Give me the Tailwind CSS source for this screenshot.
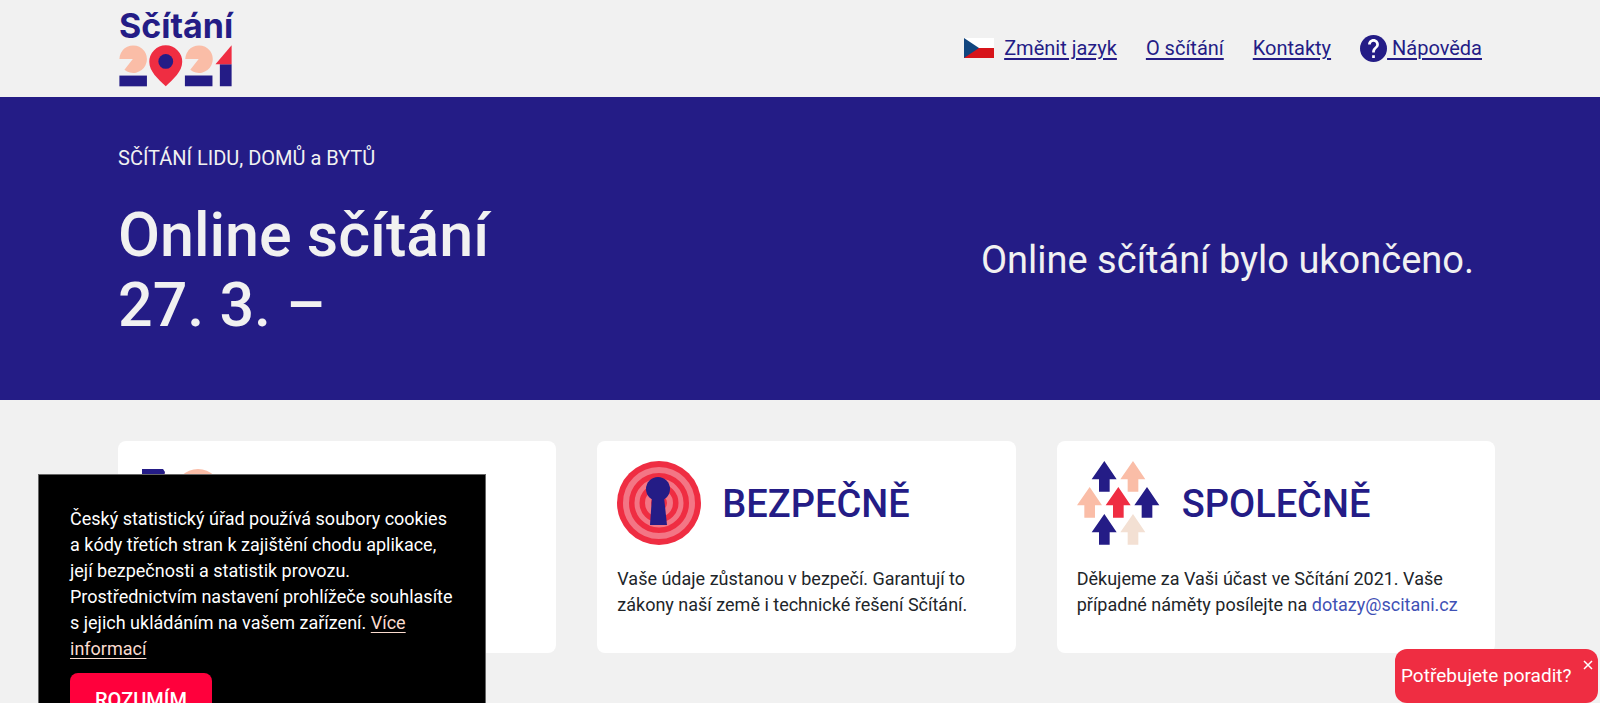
<!DOCTYPE html>
<html lang="cs">
<head>
<meta charset="utf-8">
<meta name="viewport" content="width=device-width, initial-scale=1">
<title>Sčítání 2021</title>
<script src="https://cdn.jsdelivr.net/npm/@tailwindcss/browser@4"></script>
</head>
<body class="min-h-screen bg-[#f1f1f1] font-[Roboto,sans-serif] text-[#212529]">

<header class="flex h-[97px] items-start justify-between pr-[118px] pl-[119px]">
  <a href="#" class="flex flex-col pt-[6px] text-[#241c86]">
    <span class="font-[Inter,sans-serif] text-[34px] leading-[39px] font-bold">Sčítání</span>
    <svg class="h-[42px] w-[113px]" viewBox="60 135 336 125" aria-hidden="true">
      <path fill="#fabda7" d="M101 177H61A41 41 0 1 1 76 209Z"/>
      <path fill="#241c86" d="M61 226h82v32H61z"/>
      <path fill="#ef2d42" d="M199 258C176 236 150 214 150 185A49 49 0 0 1 248 185C248 214 222 236 199 258Z"/>
      <circle cx="199" cy="184" r="22" fill="#241c86"/>
      <path fill="#fabda7" d="M297 177H257A41 41 0 1 1 272 209Z"/>
      <path fill="#241c86" d="M256 226h82v32h-82zM360 192h35v66h-35z"/>
      <path fill="#ef2d42" d="M347 192L395 136V192Z"/>
    </svg>
  </a>
  <nav class="flex items-center gap-[29px] pt-[34px] text-[20px] leading-[28px] text-[#241c86] underline-offset-3">
    <a href="#" class="flex items-center gap-[10px]">
      <svg class="h-[20px] w-[30px]" viewBox="0 0 30 20" aria-hidden="true">
        <path fill="#fff" d="M0 0h30v10H0z"/><path fill="#d7141a" d="M0 10h30v10H0z"/><path fill="#11457e" d="M0 0L15 10L0 20Z"/>
      </svg>
      <span class="underline">Změnit jazyk</span>
    </a>
    <a href="#" class="underline">O sčítání</a>
    <a href="#" class="underline">Kontakty</a>
    <a href="#" class="flex items-start">
      <svg class="h-[27px] w-[27px]" viewBox="2 2 20 20" aria-hidden="true">
        <circle cx="12" cy="12" r="10" fill="#241c86"/>
        <path fill="#fff" d="M13 19h-2v-2h2v2zm2.070-7.750l-.9.920C13.450 12.900 13 13.500 13 15h-2v-.5c0-1.100.450-2.100 1.170-2.830l1.240-1.260c.370-.360.590-.860.590-1.410 0-1.100-.9-2-2-2s-2 .9-2 2H8c0-2.210 1.790-4 4-4s4 1.790 4 4c0 .880-.360 1.680-.930 2.250z"/>
      </svg>
      <span class="leading-[26px] underline">&nbsp;Nápověda</span>
    </a>
  </nav>
</header>

<section class="flex min-h-[303px] items-start justify-between bg-[#241c86] pt-[46px] pr-[126px] pl-[118px] text-[#f1f1f1]">
  <div>
    <p class="text-[20px] leading-[30px]">SČÍTÁNÍ LIDU, DOMŮ a BYTŮ</p>
    <h1 class="mt-[27px] text-[61px] leading-[70px] font-medium">Online sčítání<br>27. 3. –</h1>
  </div>
  <p class="mt-[93px] text-[38px] leading-[48px]">Online sčítání bylo ukončeno.</p>
</section>

<main class="grid grid-cols-[22fr_21fr_22fr] gap-[41px] pt-[41px] pr-[105px] pl-[118px] text-[18px] leading-[26px]">
  <article class="min-h-[212px] rounded-lg bg-white p-[20px]">
    <svg class="h-[84px] w-[84px]" viewBox="0 0 84 84" aria-hidden="true">
      <path fill="#241c86" d="M4 8h21l2 3v33H4z"/>
      <path fill="#fabda7" d="M27 11v34h-9z"/>
      <circle cx="60" cy="31" r="23" fill="#fabda7"/>
    </svg>
  </article>
  <article class="min-h-[212px] rounded-lg bg-white p-[20px]">
    <div class="flex items-center gap-[21px]">
      <svg class="h-[84px] w-[84px]" viewBox="0 0 84 84" aria-hidden="true">
        <circle cx="42" cy="42" r="42" fill="#ef2d42"/>
        <g fill="none" stroke="#f37685" stroke-width="6">
          <circle cx="42" cy="42" r="33"/><circle cx="42" cy="42" r="22" stroke-width="5"/><circle cx="42" cy="42" r="11"/>
        </g>
        <circle cx="41" cy="28" r="12" fill="#241c86"/>
        <path fill="#241c86" d="M35 36h12l3 28H33z"/>
      </svg>
      <h2 class="pt-[2px] text-[38px] leading-[48px] font-medium text-[#241c86]">BEZPEČNĚ</h2>
    </div>
    <p class="mt-[21px]">Vaše údaje zůstanou v bezpečí. Garantují to zákony naší země i technické řešení Sčítání.</p>
  </article>
  <article class="min-h-[212px] rounded-lg bg-white p-[20px]">
    <div class="flex items-center gap-[21px]">
      <svg class="h-[84px] w-[84px]" viewBox="0 0 252 252" aria-hidden="true">
        <defs><path id="arrow" d="M38 0L75 55H54V92H22V55H0Z"/></defs>
        <use href="#arrow" x="44" fill="#241c86"/>
        <use href="#arrow" x="130" fill="#fabda7"/>
        <use href="#arrow" x="0" y="78" fill="#fabda7"/>
        <use href="#arrow" x="86" y="78" fill="#ef2d42"/>
        <use href="#arrow" x="172" y="78" fill="#241c86"/>
        <use href="#arrow" x="44" y="159" fill="#241c86"/>
        <use href="#arrow" x="130" y="159" fill="#f3e0d3"/>
      </svg>
      <h2 class="pt-[2px] text-[38px] leading-[48px] font-medium text-[#241c86]">SPOLEČNĚ</h2>
    </div>
    <p class="mt-[21px]">Děkujeme za Vaši účast ve Sčítání 2021. Vaše případné náměty posílejte na <a href="#" class="text-[#3f51b5]">dotazy@scitani.cz</a></p>
  </article>
</main>

<aside class="fixed top-[474px] left-[38px] w-[448px] border border-[#666] bg-black px-[31px] pt-[31px] pb-8 text-[18px] leading-[26px] text-white">
  <p>Český statistický úřad používá soubory cookies a&nbsp;kódy třetích stran k&nbsp;zajištění chodu aplikace, její bezpečnosti a statistik provozu. Prostřednictvím nastavení prohlížeče souhlasíte s&nbsp;jejich ukládáním na vašem zařízení. <a href="#" class="text-[#fbdccf] underline underline-offset-3">Více informací</a></p>
  <button class="mt-[11px] h-[54px] rounded-lg bg-[#ff003c] px-[25px] text-[20px] font-medium">ROZUMÍM</button>
</aside>

<div class="fixed right-[2px] bottom-0 flex h-[54px] w-[203px] items-center rounded-xl bg-[#ef2d42] pl-[6px] text-[19px] leading-[28px] text-white">
  <button>Potřebujete poradit?</button>
  <button aria-label="Zavřít" class="absolute top-[11px] right-[5px]">
    <svg class="h-[10px] w-[10px]" viewBox="0 0 10 10" fill="none" stroke="#fff" stroke-width="1.5" aria-hidden="true"><path d="M1 1L9 9M9 1L1 9"/></svg>
  </button>
</div>

</body>
</html>
